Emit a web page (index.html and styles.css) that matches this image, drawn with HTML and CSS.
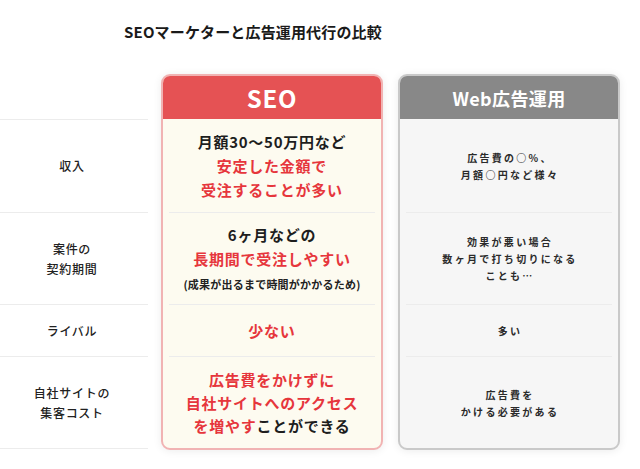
FILE: index.html
```html
<!DOCTYPE html>
<html lang="ja">
<head>
<meta charset="utf-8">
<link rel="stylesheet" href="styles.css">
</head>
<body>
<h1 class="title">SEOマーケターと広告運用代行の比較</h1>
<div class="table">
  <div class="labels">
    <div class="row r1 label"><p>収入</p></div>
    <div class="row r2 label"><p>案件の<br>契約期間</p></div>
    <div class="row r3 label"><p>ライバル</p></div>
    <div class="row r4 label"><p>自社サイトの<br>集客コスト</p></div>
  </div>
  <div class="card seo">
    <div class="card-head">SEO</div>
    <div class="card-body">
      <div class="row r1 cell"><p>月額30〜50万円など<br><span class="red">安定した金額で<br>受注することが多い</span></p></div>
      <div class="row r2 cell"><p>6ヶ月などの<br><span class="red">長期間で受注しやすい</span><br><span class="note">(成果が出るまで時間がかかるため)</span></p></div>
      <div class="row r3 cell"><p><span class="red">少ない</span></p></div>
      <div class="row r4 cell tight"><p><span class="red">広告費をかけずに<br>自社サイトへのアクセス<br>を増やす</span>ことができる</p></div>
    </div>
  </div>
  <div class="card web">
    <div class="card-head">Web広告運用</div>
    <div class="card-body">
      <div class="row r1 cell"><p>広告費の○%、<br>月額○円など様々</p></div>
      <div class="row r2 cell"><p>効果が悪い場合<br>数ヶ月で打ち切りになる<br>ことも…</p></div>
      <div class="row r3 cell"><p>多い</p></div>
      <div class="row r4 cell"><p>広告費を<br>かける必要がある</p></div>
    </div>
  </div>
</div>
</body>
</html>
```
FILE: styles.css
```css
html, body {
  margin: 0;
  padding: 0;
  background: #ffffff;
}
body {
  width: 640px;
  height: 469px;
  overflow: hidden;
  font-family: "Noto Sans CJK JP", "Noto Sans", sans-serif;
  color: #222222;
}
p {
  margin: 0;
}
.title {
  margin: 0;
  padding: 20px 0 0 124px;
  font-size: 15px;
  line-height: 24px;
  font-weight: 700;
  color: #1a1a1a;
  letter-spacing: 0.01em;
}
.table {
  display: flex;
  align-items: flex-start;
  margin-top: 30px;
}
.labels {
  width: 148px;
  margin-top: 45px;
  margin-right: 13px;
  border-top: 1px solid #ececec;
}
.row {
  box-sizing: border-box;
  display: flex;
  align-items: center;
  justify-content: center;
  text-align: center;
  border-bottom: 1px solid #ececec;
}
.r1 { height: 93px; }
.r2 { height: 92px; }
.r3 { height: 52px; }
.r4 { height: 92px; }
.label {
  font-size: 12px;
  line-height: 20px;
  font-weight: 500;
  letter-spacing: 0.06em;
  color: #222;
  padding-right: 4px;
}
.card {
  box-sizing: border-box;
  width: 222px;
  border-radius: 9px;
  border: 2px solid;
  overflow: hidden;
  box-shadow: 0 1px 8px rgba(0, 0, 0, 0.08);
}
.card + .card {
  margin-left: 15px;
}
.card-head {
  height: 43px;
  display: flex;
  align-items: center;
  justify-content: center;
  color: #ffffff;
  font-weight: 700;
}
.card-body {
  padding: 0 6px;
}
.card-body .r1 { height: 94px; }
.card-body .r4 { height: 91px; border-bottom: none; }
.seo {
  border-color: #f1b3b3;
  background: #fdfbf0;
}
.seo .card-head {
  background: #e55254;
  font-size: 24px;
  letter-spacing: 0.03em;
}
.seo .cell {
  font-size: 15px;
  line-height: 24px;
  font-weight: 700;
  letter-spacing: 0.05em;
  color: #1e1e1e;
}
.seo .tight {
  line-height: 23px;
}
.red {
  color: #e6363c;
}
.note {
  font-size: 11px;
  line-height: 22px;
  letter-spacing: 0.02em;
  color: #222;
}
.web {
  border-color: #c9c9c9;
  background: #f6f6f6;
}
.web .card-head {
  background: #888888;
  font-size: 18px;
  letter-spacing: 0.02em;
}
.web .cell {
  font-size: 10px;
  line-height: 17px;
  font-weight: 700;
  letter-spacing: 2.3px;
  color: #2a2a2a;
  padding-left: 2px;
}
```
